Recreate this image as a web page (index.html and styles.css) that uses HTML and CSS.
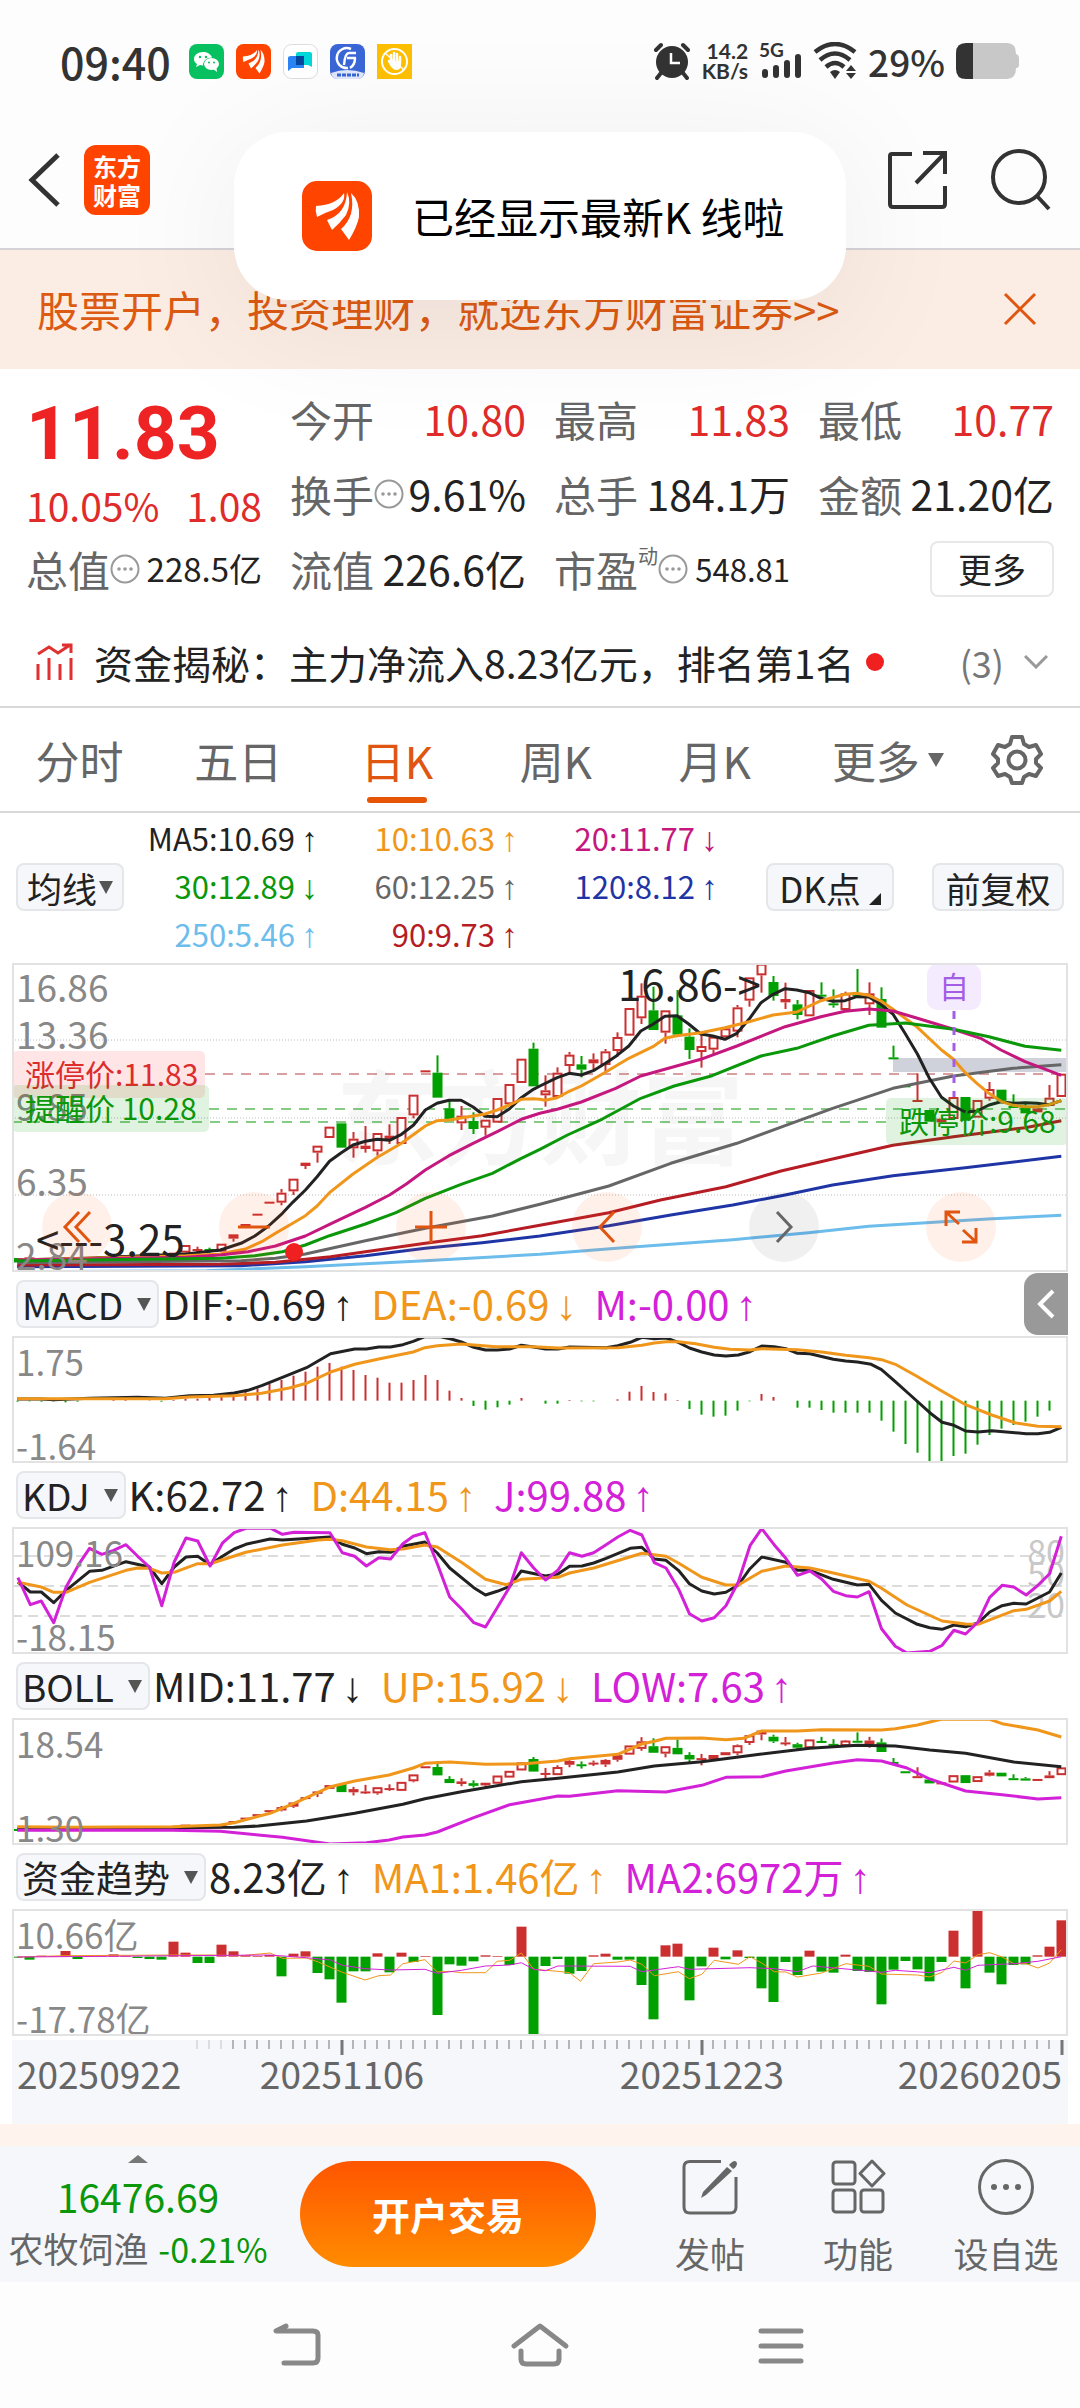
FILE: index.html
```html
<!DOCTYPE html>
<html lang="zh-CN">
<head>
<meta charset="utf-8">
<meta name="viewport" content="width=device-width, initial-scale=1">
<title>日K行情</title>
<link rel="stylesheet" href="styles.css">
</head>
<body>
<svg class="defs" aria-hidden="true">
  <symbol id="feather" viewBox="0 0 70 70">
    <rect width="70" height="70" rx="15" fill="#ff4400"/>
    <path fill="#fff" d="M14 25Q34 24 42 12Q44 22 31 29Q22 32 15 36Q13 30 14 25ZM45 11Q50 22 44 34Q38 42 30 49L25 39Q44 33 45 11ZM49 12Q58 20 57 36Q55 46 47 59L39 48Q54 35 49 12Z"/>
  </symbol>
  <symbol id="more-dots" viewBox="0 0 30 30">
    <circle cx="15" cy="15" r="13.5" fill="none" stroke="#999" stroke-width="2"/>
    <g fill="#999"><circle cx="9" cy="15" r="1.8"/><circle cx="15" cy="15" r="1.8"/><circle cx="21" cy="15" r="1.8"/></g>
  </symbol>
</svg>

<div class="top">
  <div class="status">
    <span class="clock">09:40</span>
    <div class="apps">
      <svg viewBox="0 0 35 35"><rect width="35" height="35" rx="8" fill="#07c160"/><path fill="#fff" d="M14 8c-5 0-9 3-9 7 0 2 1 4 3 5l-1 3 4-2 3 .5c0-5 4-8 9-8C22 10 18 8 14 8z"/><ellipse cx="22.500" cy="20" rx="7.500" ry="6" fill="#fff"/><path fill="#fff" d="M24 25l4 3-.5-4z"/><g fill="#07c160"><circle cx="11" cy="13" r="1.200"/><circle cx="17" cy="13" r="1.200"/><circle cx="20" cy="18.500" r="1"/><circle cx="25" cy="18.500" r="1"/></g></svg>
      <svg viewBox="0 0 35 35"><use href="#feather"/></svg>
      <svg viewBox="0 0 35 35"><rect x=".5" y=".5" width="34" height="34" rx="8" fill="#fff" stroke="#ddd"/><path fill="#2a84f5" d="M8 12h13v12H9l-4 3V14q0-2 3-2z"/><path fill="#00d8dc" d="M15 8h12q2 0 2 2v13l-4-2H13V10q0-2 2-2z"/><path fill="#04479c" d="M13 12h8v9h-8z"/></svg>
      <svg viewBox="0 0 35 35"><rect width="35" height="35" rx="8" fill="#3a66d6"/><path fill="#dfe8fb" d="M1 29Q17 23 34 29Q33 35 27 35H8Q2 35 1 29z"/><path fill="none" stroke="#fff" stroke-width="2.500" d="M21 5A10 10 0 1 0 18 24M26 9H19Q15 9 14 21M26 14H17M25 14Q25 21 20 24"/><path stroke="#3a66d6" stroke-width="3" stroke-dasharray="4 1" d="M7 31H29"/></svg>
      <svg viewBox="0 0 35 35"><rect width="35" height="35" fill="#ffbf00"/><circle cx="17.500" cy="17.500" r="12.500" fill="none" stroke="#fff" stroke-width="2"/><path fill="none" stroke="#fff" stroke-width="2.500" stroke-linecap="round" d="M14 19V11M17 18V9M20 18V10M23 19V13M12 17l3 5"/><path fill="#fff" d="M13 17h11v4q0 5-5 5-3 0-5-4z"/><path stroke="#fff" stroke-width="1.500" d="M8 9L27 26"/></svg>
    </div>
    <div class="signals">
      <svg width="38" height="38" viewBox="0 0 38 38"><circle cx="19" cy="20" r="16" fill="#333"/><path fill="none" stroke="#333" stroke-width="4" stroke-linecap="round" d="M3 8L8 3M35 8L30 3M8 31L4 36M30 31L34 36"/><path fill="none" stroke="#fff" stroke-width="2.500" d="M18 11V21H27"/></svg>
      <span class="speed">14.2<br>KB/s</span>
      <svg width="43" height="38" viewBox="0 0 43 38"><text x="0" y="15" class="net">5G</text><path stroke="#333" stroke-width="6" stroke-linecap="round" d="M6 30V33M17 26V33M28 21V33M39 15V33"/></svg>
      <svg width="44" height="38" viewBox="0 0 44 38"><g fill="none" stroke="#333" stroke-width="4.500"><path d="M2 10Q22-6 42 10M7 18Q22 5 37 18M13 25Q22 17 31 25"/></g><path fill="#333" d="M17 30Q22 26 27 30L22 37zM33 29l5-6 5 6zM33 31l5 6 5-6z"/></svg>
      <span class="percent">29%</span>
      <svg width="64" height="36" viewBox="0 0 64 36"><path fill="#c8c8c8" d="M9 0H51Q60 0 60 11Q63 12 63 15V22Q63 25 60 25Q60 36 51 36H9z"/><path fill="#333" d="M17 0H10Q0 0 0 10V26Q0 36 10 36H17z"/></svg>
    </div>
  </div>

  <header class="bar">
    <button class="plain" aria-label="返回"><svg width="32" height="54" viewBox="0 0 32 54"><path fill="none" stroke="#333" stroke-width="5" d="M30 2L4 27L30 52"/></svg></button>
    <span class="brand">东方<br>财富</span>
    <button class="plain share" aria-label="分享"><svg width="60" height="60" viewBox="0 0 60 60"><path fill="none" stroke="#333" stroke-width="4" d="M24 4H4Q2 4 2 6V54Q2 57 5 57H54Q57 57 57 54V36M35 3H57V24M57 3L28 33"/></svg></button>
    <button class="plain" aria-label="搜索"><svg width="62" height="62" viewBox="0 0 62 62"><circle cx="29" cy="28" r="26" fill="none" stroke="#333" stroke-width="4"/><path stroke="#333" stroke-width="4" d="M47 47L59 60"/></svg></button>
  </header>

  <aside class="banner">
    <a href="#open">股票开户，投资理财，就选东方财富证券&gt;&gt;</a>
    <button class="plain" aria-label="关闭"><svg width="34" height="34" viewBox="0 0 34 34"><path stroke="#e0550f" stroke-width="3" d="M2 2L32 32M32 2L2 32"/></svg></button>
  </aside>

  <div class="toast" role="status">
    <svg width="70" height="70"><use href="#feather"/></svg>
    <span>已经显示最新K 线啦</span>
  </div>
</div>

<section class="quote">
  <div class="price">
    <strong>11.83</strong>
    <div class="change"><span>10.05%</span><span>1.08</span></div>
  </div>
  <div class="cell"><span>今开</span><b class="red">10.80</b></div>
  <div class="cell"><span>最高</span><b class="red">11.83</b></div>
  <div class="cell"><span>最低</span><b class="red">10.77</b></div>
  <div class="cell"><span>换手<svg class="tip"><use href="#more-dots"/></svg></span><b>9.61%</b></div>
  <div class="cell"><span>总手</span><b>184.1万</b></div>
  <div class="cell"><span>金额</span><b>21.20亿</b></div>
  <div class="cell"><span>总值<svg class="tip"><use href="#more-dots"/></svg></span><b class="mid">228.5亿</b></div>
  <div class="cell"><span>流值</span><b>226.6亿</b></div>
  <div class="cell"><span>市盈<sup>动</sup><svg class="tip"><use href="#more-dots"/></svg></span><b class="small">548.81</b></div>
  <div class="cell end"><button class="outline">更多</button></div>
</section>

<a class="news" href="#news">
  <svg width="38" height="38" viewBox="0 0 38 38"><path fill="none" stroke="#e03030" stroke-width="3" d="M2 11L13 4L22 10L34 2M26 2H35V10M2 21V37M13 15V37M24 21V37M35 15V37"/></svg>
  <span>资金揭秘：主力净流入8.23亿元，排名第1名</span>
  <i class="dot"></i>
  <span class="count">(3)</span>
  <svg width="24" height="14" viewBox="0 0 24 14"><path fill="none" stroke="#999" stroke-width="3" d="M1 1L12 12L23 1"/></svg>
</a>

<nav class="tabs">
  <button>分时</button>
  <button>五日</button>
  <button class="active">日K</button>
  <button>周K</button>
  <button>月K</button>
  <button class="others">更多<svg width="16" height="14" viewBox="0 0 16 14"><path fill="#666" d="M0 0H16L8 14z"/></svg></button>
  <button class="gear" aria-label="设置"><svg width="52" height="52" viewBox="0 0 52 52"><g fill="none" stroke="#666" stroke-width="4" stroke-linejoin="round"><path d="M21 3h10l2 7 5 3 7-2 5 9-5 5v4l5 5-5 8-7-2-5 3-2 6H21l-2-6-5-3-7 2-5-8 5-5v-4l-5-5 5-9 7 2 5-3z"/><circle cx="26" cy="26" r="8.500"/></g></svg></button>
</nav>

<section class="averages">
  <button class="chip">均线<svg width="14" height="13" viewBox="0 0 14 13"><path fill="#555" d="M0 0H14L7 13z"/></svg></button>
  <div class="ma">
    <span class="black">MA5:10.69<i>↑</i></span><span class="orange">10:10.63<i>↑</i></span><span class="magenta">20:11.77<i>↓</i></span>
    <span class="green">30:12.89<i>↓</i></span><span class="gray">60:12.25<i>↑</i></span><span class="blue">120:8.12<i>↑</i></span>
    <span class="sky">250:5.46<i>↑</i></span><span class="crimson">90:9.73<i>↑</i></span>
  </div>
  <button class="chip dk">DK点<svg width="12" height="12" viewBox="0 0 12 12"><path fill="#222" d="M12 0V12H0z"/></svg></button>
  <button class="chip">前复权</button>
</section>

<main class="charts">
  <div class="panel">
    <svg id="kline" viewBox="0 0 1056 309"></svg>
    <div class="tools">
      <button aria-label="最早"><svg width="30" height="34" viewBox="0 0 30 34"><path d="M17 2L3 17L17 32M28 2L14 17L28 32"/></svg></button>
      <button aria-label="缩小"><svg width="34" height="34" viewBox="0 0 34 34"><path d="M1 17H33"/></svg></button>
      <button aria-label="放大"><svg width="34" height="34" viewBox="0 0 34 34"><path d="M1 17H33M17 1V33"/></svg></button>
      <button aria-label="左移"><svg width="20" height="34" viewBox="0 0 20 34"><path d="M17 2L3 17L17 32"/></svg></button>
      <button class="off" aria-label="右移"><svg width="20" height="34" viewBox="0 0 20 34"><path d="M3 2L17 17L3 32"/></svg></button>
      <button aria-label="全屏"><svg width="34" height="34" viewBox="0 0 34 34"><path d="M2 16V2H16M2 2L15 14M32 18V32H18M32 32L19 20"/></svg></button>
    </div>
  </div>

  <div class="head">
    <button class="chip">MACD<svg width="14" height="13" viewBox="0 0 14 13"><path fill="#555" d="M0 0H14L7 13z"/></svg></button>
    <span class="black">DIF:-0.69<i>↑</i></span><span class="orange">DEA:-0.69<i>↓</i></span><span class="purple">M:-0.00<i>↑</i></span>
    <button class="drawer" aria-label="展开"><svg width="18" height="30" viewBox="0 0 18 30"><path fill="none" stroke="#fff" stroke-width="4" d="M16 2L3 15L16 28"/></svg></button>
  </div>
  <div class="panel"><svg id="macd" viewBox="0 0 1056 127"></svg></div>

  <div class="head">
    <button class="chip">KDJ<svg width="14" height="13" viewBox="0 0 14 13"><path fill="#555" d="M0 0H14L7 13z"/></svg></button>
    <span class="black">K:62.72<i>↑</i></span><span class="orange">D:44.15<i>↑</i></span><span class="purple">J:99.88<i>↑</i></span>
  </div>
  <div class="panel"><svg id="kdj" viewBox="0 0 1056 127"></svg></div>

  <div class="head">
    <button class="chip">BOLL<svg width="14" height="13" viewBox="0 0 14 13"><path fill="#555" d="M0 0H14L7 13z"/></svg></button>
    <span class="black">MID:11.77<i>↓</i></span><span class="orange">UP:15.92<i>↓</i></span><span class="purple">LOW:7.63<i>↑</i></span>
  </div>
  <div class="panel"><svg id="boll" viewBox="0 0 1056 127"></svg></div>

  <div class="head">
    <button class="chip">资金趋势<svg width="14" height="13" viewBox="0 0 14 13"><path fill="#555" d="M0 0H14L7 13z"/></svg></button>
    <span class="black">8.23亿<i>↑</i></span><span class="orange">MA1:1.46亿<i>↑</i></span><span class="purple">MA2:6972万<i>↑</i></span>
  </div>
  <div class="panel"><svg id="fund" viewBox="0 0 1056 127"></svg></div>

  <div class="axis"><svg id="axis" viewBox="0 0 1056 84"></svg></div>
</main>

<footer class="dock">
  <a class="index" href="#index">
    <svg width="20" height="8" viewBox="0 0 20 8"><path fill="#777" d="M0 8L10 0L20 8z"/></svg>
    <span class="points">16476.69</span>
    <span class="sector">农牧饲渔 <em>-0.21%</em></span>
  </a>
  <button class="trade">开户交易</button>
  <button class="action"><svg width="56" height="56" viewBox="0 0 56 56"><path fill="none" stroke="#666" stroke-width="3" d="M39 2.500H8Q2 2.500 2 8V48Q2 54 8 54H48Q54 54 54 48V18"/><path fill="#666" d="M45 8L50 12L24 36L19 39L21 33zM47 6Q53-1 55 4Q55 8 51 10z"/></svg>发帖</button>
  <button class="action"><svg width="56" height="56" viewBox="0 0 56 56"><g fill="none" stroke="#666" stroke-width="3"><rect x="3" y="3" width="22" height="22" rx="3"/><rect x="3" y="31" width="22" height="22" rx="3"/><rect x="31" y="31" width="22" height="22" rx="3"/><path stroke-linejoin="round" d="M42 2L54 14.500L42 27L30 14.500z"/></g></svg>功能</button>
  <button class="action"><svg width="56" height="56" viewBox="0 0 56 56"><circle cx="28" cy="28" r="26.500" fill="none" stroke="#666" stroke-width="3"/><g fill="#666"><circle cx="16" cy="28" r="3"/><circle cx="28" cy="28" r="3"/><circle cx="40" cy="28" r="3"/></g></svg>设自选</button>
</footer>

<nav class="system">
  <button class="plain" aria-label="后退"><svg width="50" height="46" viewBox="0 0 50 46"><path fill="none" stroke="#888" stroke-width="5" stroke-linecap="round" stroke-linejoin="round" d="M14 4L4 9H41Q46 9 46 13V36Q46 41 41 41H12"/></svg></button>
  <button class="plain" aria-label="主页"><svg width="60" height="46" viewBox="0 0 60 46"><path fill="none" stroke="#888" stroke-width="5" stroke-linecap="round" stroke-linejoin="round" d="M4 24L30 4L56 24M11 29V37Q11 42 16 42H44Q49 42 49 37V29"/></svg></button>
  <button class="plain" aria-label="任务"><svg width="46" height="46" viewBox="0 0 46 46"><path stroke="#888" stroke-width="5" stroke-linecap="round" d="M3 9H43M3 24H43M3 39H43"/></svg></button>
</nav>
<script src="charts.js"></script>
</body>
</html>
```
FILE: styles.css
```css
* { box-sizing: border-box; }
body {
  margin: 0;
  background: #fff;
  color: #222;
  font-family: "Noto Sans CJK SC", sans-serif;
  font-size: 42px;
  line-height: 1;
}
button {
  margin: 0;
  padding: 0;
  border: 0;
  background: none;
  color: inherit;
  font: inherit;
  white-space: nowrap;
}
a { color: inherit; text-decoration: none; }
i, em { font-style: normal; }
svg { display: block; flex: none; }
.defs { position: absolute; width: 0; height: 0; }
.plain { display: flex; }

.red { color: #e02b2b; }
.black { color: #222; }
.orange { color: #f0961a; }
.magenta { color: #c5187f; }
.purple { color: #d321d8; }
.green { color: #0a970a; }
.gray { color: #666; }
.blue { color: #1f35a5; }
.sky { color: #6cbcec; }
.crimson { color: #b51c24; }

.top { position: relative; background: #fdfdfd; }
.status {
  display: flex;
  align-items: center;
  height: 122px;
  padding: 0 60px;
  color: #333;
}
.clock { font-size: 43px; font-weight: 500; }
.apps { display: flex; gap: 12px; margin-left: 18px; }
.apps svg { width: 35px; height: 35px; }
.signals { display: flex; align-items: center; gap: 11px; margin-left: auto; }
.speed { font-family: Lato, sans-serif; font-size: 21px; font-weight: 700; line-height: 20px; text-align: right; }
.net { font-family: Lato, sans-serif; font-size: 19px; font-weight: 700; fill: #333; }
.percent { font-size: 37px; font-weight: 500; }

.bar {
  display: flex;
  align-items: center;
  height: 126px;
  padding: 0 28px 10px;
}
.brand {
  margin-left: 24px;
  padding: 6px 9px;
  border-radius: 12px;
  background: #ff4400;
  color: #fff;
  font-size: 24px;
  font-weight: 700;
  line-height: 29px;
}
.share { margin-left: auto; margin-right: 42px; }
.banner {
  display: flex;
  align-items: center;
  justify-content: space-between;
  height: 121px;
  padding: 0 43px 2px 37px;
  border-top: 2px solid #d5d3d8;
  background: #fbede4;
  color: #dc5a12;
}
.toast {
  position: absolute;
  top: 132px;
  left: 50%;
  display: flex;
  align-items: center;
  gap: 40px;
  width: 612px;
  height: 168px;
  padding: 0 68px;
  border-radius: 54px;
  background: #fff;
  box-shadow: 0 20px 140px rgba(0, 0, 0, .07);
  color: #000;
  transform: translateX(-50%);
  white-space: nowrap;
}

.quote {
  display: grid;
  grid-template-columns: repeat(4, minmax(0, 1fr));
  grid-auto-rows: 75px;
  column-gap: 28px;
  padding: 12px 26px 14px;
}
.price { grid-row: span 2; color: #ee2424; }
.price strong { display: block; padding-top: 14px; font-family: Roboto, sans-serif; font-size: 75px; font-weight: 700; line-height: 76px; }
.change { display: flex; justify-content: space-between; padding-top: 14px; color: #e02b2b; font-size: 39px; line-height: 40px; }
.cell { display: flex; align-items: center; justify-content: space-between; color: #666; white-space: nowrap; }
.cell > span { display: flex; align-items: center; }
.cell b { color: #222; font-size: 41px; font-weight: 400; }
.cell .red { color: #e02b2b; }
.cell .mid { font-size: 33px; }
.cell .small { font-size: 31px; }
.cell.end { justify-content: flex-end; }
.tip { width: 30px; height: 30px; }
sup { align-self: flex-start; font-size: 20px; line-height: 16px; }
.outline {
  width: 124px;
  height: 56px;
  border: 2px solid #e8e8e8;
  border-radius: 8px;
  color: #222;
  font-size: 34px;
}

.news {
  display: flex;
  align-items: center;
  height: 88px;
  padding: 0 32px 2px 36px;
  border-bottom: 2px solid #d8d8d8;
  font-size: 39px;
}
.news span { margin-left: 20px; white-space: nowrap; }
.dot { width: 18px; height: 18px; margin-left: 12px; border-radius: 50%; background: #f02020; }
.news .count { margin-left: auto; margin-right: 20px; color: #777; font-size: 36px; }

.tabs {
  display: grid;
  grid-template-columns: repeat(6, 4fr) 3fr;
  height: 105px;
  padding-right: 8px;
  border-bottom: 2px solid #d8d8d8;
  color: #666;
  font-size: 44px;
}
.tabs button { display: flex; align-items: center; justify-content: center; gap: 8px; position: relative; }
.tabs .others { justify-content: flex-end; padding-right: 9px; }
.tabs .gear { padding-left: 10px; }
.tabs .active { color: #e0550f; }
.tabs .active::after {
  content: "";
  position: absolute;
  bottom: 8px;
  width: 60px;
  height: 6px;
  border-radius: 3px;
  background: #e65505;
}

.averages { display: flex; align-items: center; height: 150px; padding: 0 16px 2px; }
.ma {
  display: grid;
  grid-template-columns: 194px 200px 200px;
  grid-auto-rows: 48px;
  align-items: center;
  font-size: 31px;
}
.ma span { text-align: right; white-space: nowrap; }
.ma i, .head i { margin-left: 6px; font-family: "Liberation Sans", sans-serif; font-size: 34px; }
.chip {
  display: flex;
  align-items: center;
  justify-content: center;
  gap: 2px;
  height: 48px;
  padding: 0 6px;
  border: 2px solid #e5e6e9;
  border-radius: 8px;
  background: #f6f7fa;
  color: #222;
  font-size: 35px;
}
.averages > .chip:first-child { width: 108px; }
.averages > .chip:last-child { width: 132px; margin-left: 38px; }
.averages > .dk { width: 128px; margin-left: auto; gap: 8px; }
.dk svg { align-self: flex-end; margin-bottom: 4px; }

.charts { padding: 0 12px; }
.panel { position: relative; outline: 2px solid #e2e2e2; outline-offset: -2px; }
.panel > svg, .axis > svg { width: 100%; height: auto; font-size: 37px; }
.tools {
  position: absolute;
  bottom: 10px;
  left: 0;
  display: flex;
  justify-content: space-between;
  width: 100%;
  padding: 0 72px 0 30px;
}
.tools button {
  display: flex;
  align-items: center;
  justify-content: center;
  width: 70px;
  height: 70px;
  border-radius: 50%;
  background: rgba(255, 90, 20, .09);
}
.tools path { fill: none; stroke: #e0550f; stroke-width: 3; }
.tools .off { background: rgba(0, 0, 0, .06); }
.tools .off path { stroke: #666; }

.head { display: flex; align-items: center; height: 64px; padding-left: 4px; font-size: 40px; }
.head i { margin-left: 6px; font-size: 42px; line-height: 40px; }
.head .chip { gap: 14px; margin-right: 3px; padding: 0 6px 0 4px; font-size: 37px; }
.head span { margin-right: 18px; white-space: nowrap; }
.drawer {
  display: flex;
  align-items: center;
  justify-content: center;
  width: 44px;
  height: 62px;
  margin-left: auto;
  border-radius: 14px 0 0 14px;
  background: #999;
}
.axis { margin-top: 4px; background: #f6f7fa; }
#axis text { fill: #666; }

.dock {
  display: grid;
  grid-template-columns: 276px 1fr 148px 148px 148px;
  align-items: center;
  height: 158px;
  border-top: 22px solid #fff3ee;
  background: #f6f7fa;
  color: #666;
  font-size: 35px;
}
.index { display: flex; flex-direction: column; align-items: center; gap: 14px; white-space: nowrap; }
.index svg { margin-top: -8px; }
.points { color: #0a970a; font-size: 39px; }
.sector em { margin-left: 2px; color: #0a970a; font-size: 34px; }
.trade {
  height: 106px;
  margin: 0 40px 0 24px;
  border-radius: 53px;
  background: linear-gradient(#ff5500, #ff8c00);
  color: #fff;
  font-size: 38px;
  font-weight: 700;
}
.action { display: flex; flex-direction: column; align-items: center; gap: 20px; }

.system { display: flex; align-items: center; justify-content: center; gap: 188px; height: 126px; padding-right: 4px; background: #fdfdfd; }

.label { fill: #888; }
.faint { fill: #c8c8c8; font-size: 34px; }
#macd, #kdj, #boll, #fund { font-size: 35px; }
.watermark { fill: #f6f6f6; font-size: 102px; font-weight: 700; }
.note { fill: #222; font-size: 42px; }
.tag { font-size: 30px; }
```
FILE: charts.js
```js
// Series are kept in plot units: three units per pixel down, and a
// per-chart number of units per pixel across.
const RED = '#cb2f2f', GREEN = '#00a000', BLACK = '#222', ORANGE = '#f0961a', PURPLE = '#d321d8';
const LEFT = 12;
const barX = i => 5.5 + 12 * i;

function line(points, top, unitX, color, width) {
  const d = points.trim().split(/\s+/).map(p => {
    const [x, y] = p.split(',').map(Number);
    return (x / unitX - LEFT).toFixed(1) + ',' + ((y - top) / 3).toFixed(1);
  }).join(' ');
  return `<polyline points="${d}" fill="none" stroke="${color}" stroke-width="${width}" stroke-linejoin="round"/>`;
}
const rect = (x, y, w, h, fill, extra = '') =>
  `<rect x="${x}" y="${y}" width="${w}" height="${h}" fill="${fill}" ${extra}/>`;
const text = (x, y, cls, s, extra = '') => `<text x="${x}" y="${y}" class="${cls}" ${extra}>${s}</text>`;
const rule = (x1, y, x2, color, dash, w = 1) =>
  `<path d="M${x1} ${y}H${x2}" stroke="${color}" stroke-width="${w}" stroke-dasharray="${dash}"/>`;

// direction, body top, body bottom, high, low
const candles = `g 924 928|r 922 928|g 926 930|r 924 928|r 922 926|g 924 929|r 922 926|r 919 925|g 921 925|r 915 921|g 917 922|r 913 919|g 912 918|r 908 915
r 885 908 885 910|r 897 901 890 906|g 897 901 893 908|r 881 905|r 853 866 853 875|r 822 827|r 791 796|r 755 760|r 728 758 717 766|r 686 724 686 735
r 638 648 638 657|r 587 608 587 638|r 530 564|g 520 593|r 566 595 546 623|r 587 597 528 608|r 549 604 549 617|r 557 567 523 582|r 501 582|r 434 496 434 505
r 361 366|g 368 443 316 443|g 475 512 450 512|r 497 520 468 540|g 513 537 487 552|r 509 533 509 557|r 444 518|r 402 463|r 326 399|g 296 409 278 409
r 421 436 376 470|r 368 441 352 441|r 314 348 306 370|g 343 359 318 382|r 328 340 310 358|r 304 345 297 367|r 261 303 247 320|r 174 257|r 137 205 100 222|g 181 240 110 240
r 181 248 181 281|g 196 254 120 254|g 260 300 235 327|r 288 306 250 353|r 260 299 260 313|r 235 262|r 172 245 165 262|r 82 152 82 170|r 41 76 41 128|g 96 138 78 152
r 147 157 98 177|g 163 195 150 208|r 120 199|g 134 139 97 150|g 160 166 118 173|r 130 180 125 185|g 132 138 57 138|r 130 163 97 195|g 147 233 112 233|g 322 328 287 328
g 406 411|r 450 455 370 455|g 480 515|r 506 517|r 441 507|g 441 512|r 450 503|r 417 446 396 452|g 419 452|g 468 472 433 472
g 470 490 458 490|r 475 487|r 443 468 405 468|r 371 441`.split(/[|\n]/).map(s => {
  const [dir, a, b, hi = a, lo = b] = s.split(' ');
  return { up: dir === 'r', a: +a, b: +b, hi: +hi, lo: +lo };
});

function drawCandles(y) {
  return candles.map((k, i) => {
    const c = k.up ? RED : GREEN, x = barX(i), a = y(k.a), b = y(k.b);
    let s = '';
    if (k.hi < k.a) s += `<path d="M${x} ${y(k.hi)}V${a}" stroke="${c}" stroke-width="2"/>`;
    if (k.lo > k.b) s += `<path d="M${x} ${b}V${y(k.lo)}" stroke="${c}" stroke-width="2"/>`;
    s += k.up && b - a > 5
      ? rect(x - 4, a + 1, 8, b - a - 2, '#fff', `stroke="${c}" stroke-width="2"`)
      : rect(x - 5, a, 10, Math.max(b - a, 2), c);
    return s;
  }).join('');
}

const S = 1568; // first unit of the right half
const join = (l, r) => l + ' ' + r.trim().split(/\s+/).map(p => {
  const [x, y] = p.split(',').map(Number);
  return (x + S) + ',' + y;
}).join(' ');

const averages = [
  ['#6cbcec', join('50,965 600,962 887,950 1235,932 1568,913', '260,892 560,869 780,848 955,829 1300,807 1514,796')],
  ['#1f35a5', join('50,950 700,947 887,935 1061,917 1235,895 1400,878 1568,858', '200,827 380,795 560,765 712,735 850,705 1025,677 1235,653 1514,619')],
  ['#b51c24', join('50,945 640,943 800,937 960,920 1061,905 1235,880 1400,857 1568,826', '200,788 350,750 540,710 700,663 850,627 1025,586 1201,560 1409,533 1514,512')],
  ['#666', join('50,938 700,932 800,925 887,912 1061,872 1235,835 1430,798 1568,763', '200,708 380,640 572,580 712,527 850,475 1025,415 1201,378 1374,355 1514,344')],
  [BLACK, join('50,930 250,925 400,918 540,912 640,900 700,880 740,858 780,828 820,790 850,757 887,720 921,680 957,634 991,608 1025,585 1061,574 1096,568 1131,571 1166,553 1201,525 1235,480 1269,460 1304,451 1339,451 1374,471 1409,499 1444,500 1479,477 1514,443 1549,418 1568,408', '50,383 85,370 120,375 155,362 190,340 223,317 258,288 293,243 328,223 363,199 398,197 432,222 467,252 502,258 537,268 572,250 607,208 642,158 677,133 712,116 746,120 782,128 816,145 851,154 886,152 920,140 955,141 990,163 1025,192 1060,250 1096,312 1131,385 1166,442 1201,468 1235,486 1269,483 1304,465 1339,455 1374,460 1409,458 1444,460 1479,464 1514,452')],
  [ORANGE, join('50,930 540,917 640,912 713,897 760,875 800,850 850,820 887,797 921,768 957,728 1025,672 1096,622 1166,580 1235,528 1269,512 1304,510 1374,498 1409,492 1444,480 1479,465 1514,448 1549,446 1568,448', '15,451 50,443 85,424 120,408 190,367 258,325 328,290 363,265 398,257 467,248 537,233 607,215 677,195 746,186 816,152 886,133 920,130 955,136 990,153 1025,178 1096,232 1166,300 1201,328 1235,368 1269,400 1304,430 1339,454 1374,466 1409,470 1444,470 1479,464 1514,452')],
  ['#c5187f', join('50,930 540,922 640,915 720,905 800,888 887,858 957,823 1061,772 1131,735 1180,702 1235,660 1304,617 1374,580 1444,545 1514,508 1568,490', '50,478 120,456 220,415 293,378 363,358 467,328 572,288 712,230 816,200 886,184 955,177 1025,183 1096,205 1201,238 1280,265 1339,300 1409,335 1514,376')],
  ['#0a970a', join('40,933 640,925 740,917 820,905 887,885 957,857 1061,822 1150,788 1235,745 1339,703 1430,670 1514,625 1568,598', '80,555 180,508 293,445 390,408 500,377 642,318 746,295 850,258 955,226 1061,219 1201,238 1304,260 1409,289 1514,301')]
];

document.getElementById('kline').innerHTML =
  text(528, 194, 'watermark', '东方财富', 'text-anchor="middle"') +
  [77, 155, 232].map(y => rule(0, y, 1056, '#bbb', '1 2')).join('') +
  rect(881, 95, 175, 14, '#cfd2da') +
  rule(193, 111, 1056, '#b04040', '10 8') + rule(197, 146, 1056, '#0a970a', '10 8') + rule(0, 159, 874, '#0a970a', '10 8') +
  drawCandles(v => (v - 39) / 3) +
  averages.map(([c, p]) => line(p, 39, 2.904, c, 3)).join('') +
  text(4, 39, 'label', '16.86') + text(4, 86, 'label', '13.36') + text(4, 158, 'label', '9.85') +
  text(4, 233, 'label', '6.35') + text(4, 307, 'label', '2.84') +
  '<path d="M942 48V134" stroke="#a45ee5" stroke-width="3" stroke-dasharray="8 8"/>' +
  rect(915, 1, 54, 46, '#f4ebff', 'rx="10"') + text(942, 35, 'tag', '自', 'text-anchor="middle" fill="#a45ee5"') +
  rect(0, 88, 193, 47, 'rgba(255,0,0,.1)', 'rx="5"') + text(13, 123, 'tag', '涨停价:11.83', 'fill="#dc2c2c"') +
  rect(0, 122, 197, 47, 'rgba(0,160,0,.12)', 'rx="5"') + text(13, 157, 'tag', '提醒价 10.28', 'fill="#0a970a"') +
  rect(874, 135, 182, 47, 'rgba(0,160,0,.12)', 'rx="5"') + text(887, 170, 'tag', '跌停价:9.68', 'fill="#0a970a"') +
  text(24, 293, 'note', '&lt;---3.25') + text(606, 38, 'note', '16.86-&gt;') +
  '<circle cx="282" cy="289" r="9" fill="#f02020"/>';

// MACD histogram tips; 392 is the zero line
const hist = [395,394,395,394,397,395,392,392,390,390,392,391,395,390,386,386,384,380,374,365,355,342,330,317,305,290,279,290,300,315,323,338,338,330,315,330,362,384,408,419,412,404,384,392,401,401,390,394,394,392,388,365,348,366,370,390,417,434,440,437,422,394,372,381,392,413,413,420,428,428,428,428,452,485,522,548,573,578,558,551,524,495,476,465,455,440,422,392];
document.getElementById('macd').innerHTML =
  hist.map((v, i) => rect(barX(i) - 1, (Math.min(v, 392) - 198) / 3, 2, Math.abs(v - 392) / 3, v < 392 ? RED : GREEN)).join('') +
  line('25,387 60,387 78,389 130,385 200,382 240,385 275,377 310,376 340,369 360,361 380,347 410,322 445,293 480,251 515,237 532,237 550,231 567,231 585,224 600,214 617,200 640,200 655,207 670,216 688,232 705,240 722,240 740,237 757,226 775,231 792,237 810,237 827,231 880,233 897,227 915,217 932,202 950,206 967,204 985,217 1001,234 1019,246 1037,255 1054,258 1072,255 1089,245 1106,228 1124,230 1141,236 1158,250 1176,251 1210,268 1228,273 1245,276 1265,283 1280,299 1300,335 1320,372 1350,428 1368,457 1385,466 1402,483 1420,486 1440,482 1490,491 1507,491 1524,487 1541,472', 198, 1.452, BLACK, 3) +
  line('25,386 240,386 275,381 340,377 380,370 420,354 445,340 480,306 515,283 550,267 600,246 617,233 635,227 670,222 720,230 775,230 810,234 897,233 932,226 950,219 967,215 985,215 1010,221 1037,232 1060,238 1089,240 1106,236 1158,239 1193,246 1228,256 1262,263 1280,269 1300,283 1330,317 1368,364 1402,404 1440,435 1475,459 1507,469 1541,470', 198, 1.452, ORANGE, 3) +
  text(4, 40, 'label', '1.75') + text(4, 124, 'label', '-1.64');

document.getElementById('kdj').innerHTML =
  [29, 59, 89].map(y => rule(0, y, 1056, '#dcdcdc', '10 6', 2)).join('') +
  text(1053, 38, 'faint', '80', 'text-anchor="end"') + text(1053, 60, 'faint', '50', 'text-anchor="end"') + text(1053, 91, 'faint', '20', 'text-anchor="end"') +
  line('26,935 44,965 60,965 78,997 96,960 130,903 148,900 183,874 217,890 235,940 253,890 270,860 287,858 305,883 323,858 340,836 357,822 392,806 410,809 479,800 497,822 515,833 532,850 550,844 567,846 585,828 617,815 635,848 653,893 688,952 705,974 722,963 740,948 757,902 792,917 810,911 827,888 845,887 862,878 880,864 915,834 932,831 950,866 967,870 985,900 1001,940 1019,962 1037,971 1054,966 1072,944 1089,895 1106,860 1141,876 1158,900 1176,900 1210,927 1245,944 1262,942 1280,990 1300,1028 1332,1062 1350,1072 1368,1077 1385,1064 1402,1069 1420,1058 1437,1025 1455,1006 1472,999 1490,1001 1524,965 1541,908', 770, 1.452, BLACK, 3) +
  line('26,936 60,950 78,966 96,966 130,936 183,900 200,893 217,894 235,908 253,906 287,880 305,880 357,846 410,824 462,809 479,807 497,811 532,830 567,838 585,836 617,824 635,830 670,876 705,927 735,943 757,927 810,921 827,908 862,893 932,849 967,858 985,878 1019,921 1054,944 1072,944 1106,903 1141,887 1176,893 1210,908 1262,933 1280,954 1317,1004 1368,1052 1402,1061 1420,1062 1472,1021 1490,1017 1524,992 1541,963', 770, 1.452, ORANGE, 3) +
  line('26,922 44,1003 60,992 78,1057 96,950 115,880 130,834 148,852 165,840 183,823 200,858 217,890 235,1006 253,875 270,803 287,812 305,887 323,818 340,787 357,774 392,773 410,792 427,786 479,787 497,847 515,858 532,887 550,862 567,866 585,820 600,798 617,787 635,880 653,980 670,1015 688,1057 705,1070 722,1012 740,950 757,847 775,893 792,929 810,900 827,847 845,858 862,847 880,823 897,800 915,780 932,794 950,877 967,893 985,955 1001,1030 1019,1052 1037,1042 1054,1006 1072,935 1089,826 1106,775 1124,823 1141,864 1158,915 1176,902 1193,926 1210,963 1228,976 1245,980 1262,964 1280,1075 1300,1128 1317,1148 1350,1143 1368,1125 1385,1080 1402,1091 1420,1055 1437,981 1455,945 1472,950 1490,974 1507,945 1524,910 1541,798', 770, 1.452, PURPLE, 3) +
  text(4, 40, 'label', '109.16') + text(4, 124, 'label', '-18.15');

document.getElementById('boll').innerHTML =
  drawCandles(v => (18.54 - (16.86 - (v - 39) / 927 * 14.02)) / 17.24 * 127) +
  line('25,506 340,502 375,498 445,483 515,460 585,433 617,416 670,395 757,365 810,355 897,336 950,318 1019,305 1106,282 1176,265 1245,256 1300,258 1350,270 1402,280 1472,306 1541,320', 174, 1.452, BLACK, 3) +
  line('25,500 100,502 250,500 320,495 340,488 392,460 427,430 480,380 515,363 565,345 600,324 617,310 653,306 705,313 757,312 810,303 827,296 897,283 932,252 950,244 967,235 1019,234 1054,239 1080,235 1106,213 1158,213 1193,209 1280,210 1300,206 1332,195 1368,177 1437,178 1455,191 1507,210 1541,231', 174, 1.452, ORANGE, 3) +
  line('25,511 250,511 320,514 375,525 410,532 479,552 532,548 565,540 585,531 617,525 635,516 688,473 740,434 810,408 827,409 897,392 967,396 1019,376 1054,352 1106,350 1141,333 1210,309 1245,299 1280,303 1317,324 1350,357 1402,393 1455,404 1507,417 1541,413', 174, 1.452, PURPLE, 3) +
  text(4, 40, 'label', '18.54') + text(4, 124, 'label', '1.30');

// fund flow bar tips; 889 is the zero line
const flow = [892,898,886,887,872,896,887,887,882,887,893,896,898,844,877,908,908,853,873,885,887,884,948,880,873,938,957,1027,933,933,879,936,877,905,887,1064,912,916,903,885,887,914,799,1128,917,896,940,932,885,880,898,898,974,1077,855,850,1020,918,862,897,870,893,984,1025,905,944,871,934,937,883,932,935,1032,928,902,927,963,905,811,984,746,937,972,914,912,885,859,780];
document.getElementById('fund').innerHTML =
  flow.map((v, i) => rect(barX(i) - 5, (Math.min(v, 889) - 746) / 3, 10, Math.abs(v - 889) / 3, v < 889 ? RED : GREEN)).join('') +
  line('25,890 95,886 250,884 305,884 350,886 392,878 410,894 445,893 462,905 496,935 530,959 550,946 567,944 585,910 617,898 635,935 653,933 670,937 705,937 722,903 740,900 757,878 775,927 810,933 827,937 843,963 862,910 897,905 915,899 932,912 950,946 985,934 1001,955 1019,942 1037,900 1072,912 1089,889 1106,908 1124,934 1141,935 1158,950 1193,938 1228,910 1245,914 1262,918 1280,941 1332,944 1350,950 1368,936 1385,902 1402,908 1420,883 1437,877 1455,890 1472,910 1490,910 1507,923 1524,908 1541,868', 746, 1.452, ORANGE, 1) +
  line('25,890 392,884 445,892 480,899 497,915 530,925 567,929 617,927 635,939 670,930 705,917 740,914 757,907 775,927 792,931 810,917 915,918 932,934 985,919 1001,927 1089,922 1124,925 1158,934 1180,917 1245,929 1280,936 1300,930 1350,937 1385,921 1402,930 1420,915 1472,910 1507,903 1541,889', 746, 1.452, PURPLE, 1) +
  text(4, 40, 'label', '10.66亿') + text(4, 124, 'label', '-17.78亿');

let ticks = '';
for (let i = 15; i < 88; i++) {
  const major = i % 30 === 27;
  ticks += rect(barX(i) - 1, 0, major ? 3 : 1, major ? 15 : 9, i < 18 ? '#c4c4c4' : '#777');
}
document.getElementById('axis').innerHTML = ticks +
  text(5, 49, 'date', '20250922') + text(330, 49, 'date', '20251106', 'text-anchor="middle"') +
  text(690, 49, 'date', '20251223', 'text-anchor="middle"') + text(1050, 49, 'date', '20260205', 'text-anchor="end"');
```
